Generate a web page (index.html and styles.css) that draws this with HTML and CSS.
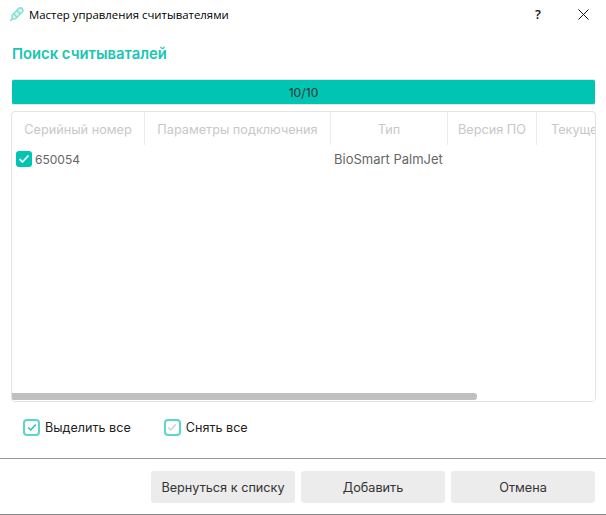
FILE: index.html
```html
<!DOCTYPE html>
<html lang="ru">
<head>
<meta charset="utf-8">
<title>Мастер управления считывателями</title>
<link rel="stylesheet" href="styles.css">
</head>
<body>
<div class="window">
  <header class="titlebar">
    <svg class="app-icon" width="16" height="16" viewBox="1 1 14 15" fill="none" stroke="#7fe0cf" stroke-width="1.300">
      <path d="M3.500 9.500 10 3a2.400 2.400 0 0 1 3.300 3.300L6.800 12.800l-3.600.6z" fill="#d5f4ee"/>
      <path d="M5 8.500l3 3M8 5.500l3 3M3.200 13.200 1.500 15"/>
    </svg>
    <span class="title">Мастер управления считывателями</span>
    <span class="help">?</span>
    <svg class="close" width="11" height="11" viewBox="0 0 11 11" stroke="#111" stroke-width="1"><path d="M.5.5l10 10M10.500.5l-10 10"/></svg>
  </header>
  <main class="content">
    <h1 class="heading">Поиск считываталей</h1>
    <div class="progress">10/10</div>
    <section class="grid">
      <div class="grid-head">
        <div class="col c1">Серийный номер</div>
        <div class="col c2">Параметры подключения</div>
        <div class="col c3">Тип</div>
        <div class="col c4">Версия ПО</div>
        <div class="col c5">Текущее</div>
      </div>
      <div class="grid-body">
        <div class="row">
          <div class="cell serial">
            <span class="check-solid"><svg width="12" height="10" viewBox="0 0 12 10" fill="none" stroke="#fff" stroke-width="1.800"><path d="M1.500 5l3 3 6-6.500"/></svg></span>
            650054
          </div>
          <div class="cell type">BioSmart PalmJet</div>
        </div>
      </div>
      <div class="scroll-track"><div class="scroll-thumb"></div></div>
    </section>
    <div class="select-row">
      <label class="option">
        <span class="check-outline"><svg width="12" height="10" viewBox="0 0 12 10" fill="none" stroke="#1cc7b4" stroke-width="1.800"><path d="M1.500 5l3 3 6-6.500"/></svg></span>
        Выделить все
      </label>
      <label class="option">
        <span class="check-outline"><svg width="12" height="10" viewBox="0 0 12 10" fill="none" stroke="#cfcfcf" stroke-width="1.800"><path d="M1.500 5l3 3 6-6.500"/></svg></span>
        Снять все
      </label>
    </div>
  </main>
  <footer class="footer">
    <button class="btn">Вернуться к списку</button>
    <button class="btn">Добавить</button>
    <button class="btn">Отмена</button>
  </footer>
</div>
</body>
</html>
```
FILE: styles.css
```css
* { box-sizing: border-box; }
html, body { margin: 0; height: 100%; background: #fff; }
body { font-family: "Inter", "Noto Sans", sans-serif; overflow: hidden; }
.window { width: 606px; height: 515px; display: flex; flex-direction: column; border-bottom: 1px solid #8a8a8a; }

.titlebar { height: 30px; display: flex; align-items: center; padding: 0 0 2px 9px; flex: none; }
.app-icon { flex: none; }
.title { font-family: "Open Sans", "Noto Sans", sans-serif; font-size: 11.4px; color: #000; margin-left: 4px; flex: 1; }
.help { font-family: "Open Sans", sans-serif; font-size: 13px; font-weight: 600; color: #111; margin-right: 37px; }
.close { margin-right: 17px; }

.content { flex: 1; padding: 0 10px 0 11px; display: flex; flex-direction: column; border-bottom: 1px solid #9a9a9a; }
.heading { margin: 14px 0 0 1px; height: 20px; line-height: 20px; font-size: 14.8px; font-weight: 600; color: #18c6b2; }
.progress { margin: 15px 1px 0; height: 26px; background: #00c5b2; border: 1px solid #e4e4e4; border-width: 1px 0; border-radius: 2px; text-align: center; font-size: 12.2px; line-height: 25px; color: #333; }

.grid { margin-top: 6px; height: 291px; border: 1px solid #e3e3e3; border-radius: 4px; display: flex; flex-direction: column; overflow: hidden; }
.grid-head { display: flex; height: 33px; flex: none; white-space: nowrap; overflow: hidden; }
.col { flex: none; text-align: center; font-size: 12.7px; line-height: 35px; color: #c8c8c8; border-right: 1px solid #ececec; overflow: hidden; }
.c1 { width: 133px; }
.c2 { width: 186px; }
.c3 { width: 117px; }
.c4 { width: 89px; }
.c5 { flex: 1; border-right: 0; padding-left: 14px; text-align: left; }

.grid-body { flex: 1; }
.row { display: flex; height: 28px; align-items: center; }
.cell { font-size: 12px; color: #666; }
.serial { width: 318px; padding-left: 4px; display: flex; align-items: center; gap: 3px; }
.type { padding-left: 4px; font-size: 13px; }
.check-solid { width: 16px; height: 16px; border-radius: 3px; background: #00c5b2; display: flex; align-items: center; justify-content: center; }

.scroll-track { height: 8px; flex: none; background: #fff; }
.scroll-thumb { width: 465px; height: 7px; background: #c0c0c0; border-radius: 0 3px 3px 0; }

.select-row { display: flex; gap: 33px; margin-top: 17px; padding-left: 12px; }
.option { display: flex; align-items: center; gap: 5px; font-size: 12.6px; color: #222; }
.check-outline { width: 17px; height: 17px; border: 2px solid #5cd6c8; border-radius: 4px; display: flex; align-items: center; justify-content: center; }
.check-outline svg { width: 10px; height: 9px; }

.footer { height: 55px; flex: none; display: flex; justify-content: flex-end; gap: 6px; padding: 12px 11px 0 0; }
.btn { width: 144px; height: 32px; border: 0; border-radius: 3px; background: #ececec; font-family: inherit; font-size: 12.7px; color: #333; padding: 0; }
```
